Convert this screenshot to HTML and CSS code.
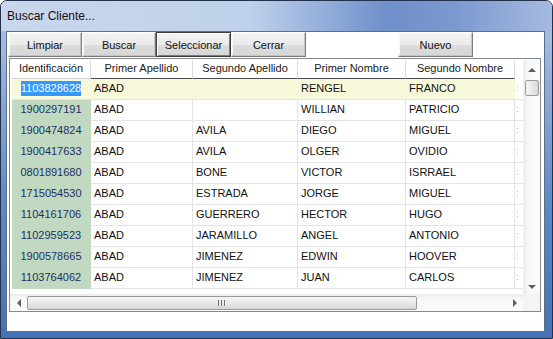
FILE: index.html
```html
<!DOCTYPE html>
<html>
<head>
<meta charset="utf-8">
<link rel="stylesheet" href="styles.css">
</head>
<body>
<div class="window">
  <div class="titlebar"><span class="title">Buscar Cliente...</span></div>
  <div class="client">
    <div class="toolbar">
      <button class="btn w74">Limpiar</button>
      <button class="btn w74">Buscar</button>
      <button class="btn w75 focus">Seleccionar</button>
      <button class="btn w75">Cerrar</button>
      <button class="btn w75 nuevo">Nuevo</button>
    </div>
    <div class="grid">
      <div class="grid-main">
        <div class="data">
          <div class="row header">
            <div class="cell c1">Identificación</div>
            <div class="cell c2">Primer Apellido</div>
            <div class="cell c3">Segundo Apellido</div>
            <div class="cell c4">Primer Nombre</div>
            <div class="cell c5">Segundo Nombre</div>
            <div class="cell c6"></div>
          </div>
          <div class="row selected">
            <div class="cell c1"><span class="hl">1103828628</span></div>
            <div class="cell c2">ABAD</div>
            <div class="cell c3"></div>
            <div class="cell c4">RENGEL</div>
            <div class="cell c5">FRANCO</div>
            <div class="cell c6">:</div>
          </div>
          <div class="row">
            <div class="cell c1">1900297191</div>
            <div class="cell c2">ABAD</div>
            <div class="cell c3"></div>
            <div class="cell c4">WILLIAN</div>
            <div class="cell c5">PATRICIO</div>
            <div class="cell c6">:</div>
          </div>
          <div class="row">
            <div class="cell c1">1900474824</div>
            <div class="cell c2">ABAD</div>
            <div class="cell c3">AVILA</div>
            <div class="cell c4">DIEGO</div>
            <div class="cell c5">MIGUEL</div>
            <div class="cell c6">:</div>
          </div>
          <div class="row">
            <div class="cell c1">1900417633</div>
            <div class="cell c2">ABAD</div>
            <div class="cell c3">AVILA</div>
            <div class="cell c4">OLGER</div>
            <div class="cell c5">OVIDIO</div>
            <div class="cell c6">:</div>
          </div>
          <div class="row">
            <div class="cell c1">0801891680</div>
            <div class="cell c2">ABAD</div>
            <div class="cell c3">BONE</div>
            <div class="cell c4">VICTOR</div>
            <div class="cell c5">ISRRAEL</div>
            <div class="cell c6">:</div>
          </div>
          <div class="row">
            <div class="cell c1">1715054530</div>
            <div class="cell c2">ABAD</div>
            <div class="cell c3">ESTRADA</div>
            <div class="cell c4">JORGE</div>
            <div class="cell c5">MIGUEL</div>
            <div class="cell c6">:</div>
          </div>
          <div class="row">
            <div class="cell c1">1104161706</div>
            <div class="cell c2">ABAD</div>
            <div class="cell c3">GUERRERO</div>
            <div class="cell c4">HECTOR</div>
            <div class="cell c5">HUGO</div>
            <div class="cell c6">:</div>
          </div>
          <div class="row">
            <div class="cell c1">1102959523</div>
            <div class="cell c2">ABAD</div>
            <div class="cell c3">JARAMILLO</div>
            <div class="cell c4">ANGEL</div>
            <div class="cell c5">ANTONIO</div>
            <div class="cell c6">:</div>
          </div>
          <div class="row">
            <div class="cell c1">1900578665</div>
            <div class="cell c2">ABAD</div>
            <div class="cell c3">JIMENEZ</div>
            <div class="cell c4">EDWIN</div>
            <div class="cell c5">HOOVER</div>
            <div class="cell c6">:</div>
          </div>
          <div class="row">
            <div class="cell c1">1103764062</div>
            <div class="cell c2">ABAD</div>
            <div class="cell c3">JIMENEZ</div>
            <div class="cell c4">JUAN</div>
            <div class="cell c5">CARLOS</div>
            <div class="cell c6">:</div>
          </div>
        </div>
        <div class="vscroll">
          <div class="sb-btn"><span class="arr up"></span></div>
          <div class="vthumb"></div>
          <div class="vtrack"></div>
          <div class="sb-btn"><span class="arr down"></span></div>
        </div>
      </div>
      <div class="grid-bottom">
        <div class="hscroll">
          <div class="sb-hbtn"><span class="arr left"></span></div>
          <div class="hthumb"><span class="grip"><i></i><i></i><i></i></span></div>
          <div class="htrack"></div>
          <div class="sb-hbtn"><span class="arr right"></span></div>
        </div>
        <div class="corner"></div>
      </div>
    </div>
  </div>
</div>
</body>
</html>
```

FILE: styles.css
```css
html, body {
  margin: 0;
  padding: 0;
  background: #ffffff;
}

.window {
  width: 553px;
  height: 339px;
  box-sizing: border-box;
  border: 1px solid #22324c;
  border-radius: 7px 7px 0 0;
  background: linear-gradient(180deg, #b4c8e5 0%, #8eacd9 25%, #5d89c6 60%, #4673b8 100%);
  display: flex;
  flex-direction: column;
  overflow: hidden;
  font-family: "Liberation Sans", Arial, sans-serif;
}

.titlebar {
  height: 30px;
  flex: none;
  box-sizing: border-box;
  padding-left: 6px;
  display: flex;
  align-items: center;
  background: linear-gradient(90deg, #c8d7ec 0%, #bfd1ea 45%, #96b0dc 58%, #6f8fcb 70%, #7b98cf 82%, #a5badf 100%);
}

.title {
  font-size: 12px;
  color: #111;
  position: relative;
  top: 0px;
}

.client {
  flex: 1;
  margin: 0 7px 6px 5px;
  border: 1px solid #5b6e88;
  background: #ffffff;
  display: flex;
  flex-direction: column;
}

.toolbar {
  display: flex;
  height: 25px;
  padding-left: 1px;
  flex: none;
}

.btn {
  box-sizing: border-box;
  height: 25px;
  margin: 0;
  padding: 0;
  font-family: "Liberation Sans", Arial, sans-serif;
  font-size: 11px;
  color: #111;
  background: linear-gradient(180deg, #f2f2f2 0%, #ebebeb 50%, #dddddd 51%, #d6d6d6 100%);
  border: 1px solid;
  border-color: #ffffff #7c7c7c #7c7c7c #ffffff;
  box-shadow: inset -1px -1px 0 #c4c4c4, inset 1px 1px 0 #f8f8f8;
}

.w74 { width: 74px; }
.w75 { width: 75px; }

.btn.focus {
  border-color: #3c3c3c;
  box-shadow: inset 1px 1px 0 #ffffff, inset -1px -1px 0 #7c7c7c;
}

.btn.nuevo {
  margin-left: 92px;
}

.grid {
  margin: 1px 0 0 2px;
  width: 532px;
  box-sizing: border-box;
  border: 1px solid #828790;
  padding-top: 1px;
  background: #ffffff;
  flex: none;
}

.grid-main {
  display: flex;
  height: 234px;
}

.data {
  width: 513px;
  padding-left: 2px;
  box-sizing: border-box;
  overflow: hidden;
  font-size: 11px;
}

.row {
  display: flex;
  height: 21px;
  box-sizing: border-box;
  border-bottom: 1px solid #e4e4e4;
}

.cell {
  flex: none;
  box-sizing: border-box;
  display: flex;
  align-items: center;
  padding-left: 3px;
  white-space: nowrap;
  overflow: hidden;
  color: #111;
  border-right: 1px solid #e4e4e4;
  padding-bottom: 2px;
}

.c1 { width: 79px; justify-content: center; padding-left: 0; background: #c1d9c1; color: #1d2f66; border-right-color: #c1d9c1; }
.c2 { width: 102px; }
.c3 { width: 105px; }
.c4 { width: 108px; }
.c5 { width: 109px; }
.c6 { width: 8px; border-right: none; color: #b5b5b5; font-size: 9px; padding-left: 1px; }

.row .c1 { box-shadow: 0 1px 0 #c1d9c1; }

.row.header {
  height: 19px;
  border-bottom: none;
}

.header .cell {
  justify-content: center;
  padding-left: 0;
  background: #ffffff;
  color: #1a1a1a;
  border-right: 1px solid #dcdcdc;
  border-bottom: 1px solid #4a4a4a;
  box-shadow: none;
}

.header .c1 {
  border-bottom-color: #d0d0d0;
}

.header .c6 {
  border-bottom: none;
  border-right: none;
}

.row.selected .cell {
  background: #f8f8da;
  border-right-color: #f8f8da;
}

.row.selected .c1 { box-shadow: none; }
.row.selected .c6 { background: #ffffff; }

.hl {
  background: #3399ff;
  color: #ffffff;
  padding: 1px 0 2px;
}

.vscroll {
  width: 17px;
  box-sizing: border-box;
  display: flex;
  flex-direction: column;
  background: linear-gradient(90deg, #ececec 0%, #f8f8f8 30%, #fbfbfb 100%);
  border-left: 1px solid #f0f0f0;
}

.sb-btn {
  height: 19px;
  display: flex;
  align-items: center;
  justify-content: center;
}

.vthumb {
  height: 14px;
  margin: 1px 1px 0 1px;
  border: 1px solid #9a9a9a;
  border-radius: 2px;
  background: linear-gradient(90deg, #f4f4f4 0%, #e8e8e8 50%, #d9d9d9 100%);
}

.vtrack { flex: 1; }

.arr {
  width: 0;
  height: 0;
  display: block;
}

.arr.up {
  border-left: 4px solid transparent;
  border-right: 4px solid transparent;
  border-bottom: 4px solid #5e5e5e;
  margin-top: 1px;
}

.arr.down {
  border-left: 4px solid transparent;
  border-right: 4px solid transparent;
  border-top: 4px solid #5e5e5e;
  margin-top: 4px;
}

.arr.left {
  border-top: 4px solid transparent;
  border-bottom: 4px solid transparent;
  border-right: 4px solid #5e5e5e;
}

.arr.right {
  border-top: 4px solid transparent;
  border-bottom: 4px solid transparent;
  border-left: 4px solid #5e5e5e;
}

.grid-bottom {
  display: flex;
  height: 17px;
}

.hscroll {
  width: 513px;
  display: flex;
  align-items: stretch;
  background: linear-gradient(180deg, #ececec 0%, #f8f8f8 30%, #fbfbfb 100%);
}

.sb-hbtn {
  width: 17px;
  display: flex;
  align-items: center;
  justify-content: center;
}

.hthumb {
  width: 390px;
  box-sizing: border-box;
  margin: 2px 0 1px 0;
  border: 1px solid #9a9a9a;
  border-radius: 2px;
  background: linear-gradient(180deg, #f4f4f4 0%, #e8e8e8 50%, #d6d6d6 100%);
  display: flex;
  align-items: center;
  justify-content: center;
}

.grip {
  display: flex;
  gap: 1px;
}

.grip i {
  display: block;
  width: 1px;
  height: 6px;
  background: #6a6a6a;
  border-right: 1px solid #f4f4f4;
}

.htrack { flex: 1; }

.corner {
  width: 17px;
  background: #f4f4f4;
}
```
